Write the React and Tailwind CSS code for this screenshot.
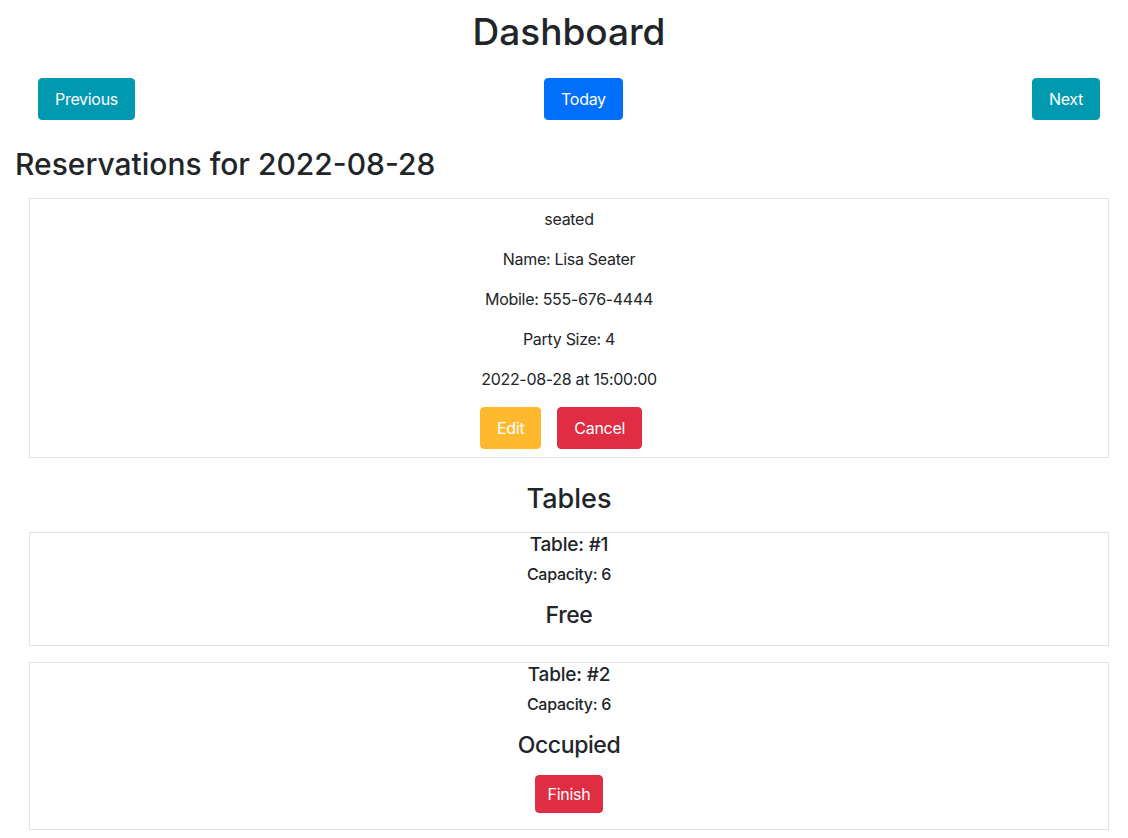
import React from 'react';

const font = { fontFamily: 'Inter, "Liberation Sans", sans-serif' };

function Btn({ className, children }) {
  return (
    <button className={`border rounded-[4px] text-white text-base leading-6 tracking-[-0.3px] ${className}`}>
      {children}
    </button>
  );
}

function TableCard({ number, capacity, occupied }) {
  return (
    <div className="mx-[19px] border border-[#dee2e6] text-center">
      <h5 className="text-[19px] leading-6 font-medium tracking-[-0.2px]">Table: #{number}</h5>
      <h6 className="mt-2 text-base leading-[19px] font-medium tracking-[-0.3px]">Capacity: {capacity}</h6>
      <h4 className="mt-[17px] mb-4 text-[23px] leading-[28px] font-medium tracking-[-0.4px]">
        {occupied ? 'Occupied' : 'Free'}
      </h4>
      {occupied && (
        <div className="mb-4">
          <Btn className="px-3 py-1.5 bg-[#e02d44] border-[#e02d44]">Finish</Btn>
        </div>
      )}
    </div>
  );
}

export default function App() {
  return (
    <div className="bg-white text-[#212529] min-h-[838px] w-full pl-[10px]" style={font}>
      {/* Header */}
      <h1 className="pt-2 text-center text-[37px] leading-[47px] font-medium">Dashboard</h1>

      <div className="mt-[23px] mx-[28px] flex items-center justify-between">
        <Btn className="px-4 py-2 bg-[#0099b0] border-[#0099b0]">Previous</Btn>
        <Btn className="px-4 py-2 bg-[#006ffc] border-[#006ffc]">Today</Btn>
        <Btn className="px-4 py-2 bg-[#0099b0] border-[#0099b0]">Next</Btn>
      </div>

      <h3 className="mt-[26px] ml-[5px] text-[30px] leading-[36px] font-medium">
        Reservations for 2022-08-28
      </h3>

      {/* Reservation */}
      <div className="mt-[16px] mx-[19px] border border-[#dee2e6] pt-2 pb-2 text-center tracking-[-0.3px]">
        <p className="mb-4 leading-6">seated</p>
        <p className="mb-4 leading-6">Name: Lisa Seater</p>
        <p className="mb-4 leading-6">Mobile: 555-676-4444</p>
        <p className="mb-4 leading-6">Party Size: 4</p>
        <p className="mb-4 leading-6">2022-08-28 at 15:00:00</p>
        <div className="flex justify-center gap-4 pr-4">
          <Btn className="px-4 py-2 bg-[#ffb92f] border-[#ffb92f]">Edit</Btn>
          <Btn className="px-4 py-2 bg-[#e02d44] border-[#e02d44]">Cancel</Btn>
        </div>
      </div>

      <h3 className="mt-[24px] text-center text-[27px] leading-[34px] font-medium">Tables</h3>

      <div className="mt-4 flex flex-col gap-4">
        <TableCard number={1} capacity={6} occupied={false} />
        <TableCard number={2} capacity={6} occupied={true} />
      </div>
    </div>
  );
}
